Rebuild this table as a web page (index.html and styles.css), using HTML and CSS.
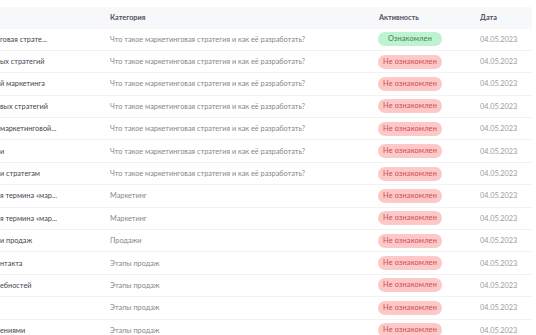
FILE: index.html
```html
<!DOCTYPE html>
<html lang="ru">
<head>
  <meta charset="UTF-8" />
  <title>Материалы</title>
  <link rel="stylesheet" href="styles.css">
</head>
<body>
  <div class="table">
    <div class="row head">
      <div class="cell"></div>
      <div class="cell">Категория</div>
      <div class="cell act">Активность</div>
      <div class="cell">Дата</div>
    </div>

    <div class="row">
      <div class="cell name">говая страте...</div>
      <div class="cell cat">Что такое маркетинговая стратегия и как её разработать?</div>
      <div class="cell"><span class="badge ok">Ознакомлен</span></div>
      <div class="cell date">04.05.2023</div>
    </div>
    <div class="row">
      <div class="cell name">ых стратегий</div>
      <div class="cell cat">Что такое маркетинговая стратегия и как её разработать?</div>
      <div class="cell"><span class="badge no">Не ознакомлен</span></div>
      <div class="cell date">04.05.2023</div>
    </div>
    <div class="row">
      <div class="cell name">й маркетинга</div>
      <div class="cell cat">Что такое маркетинговая стратегия и как её разработать?</div>
      <div class="cell"><span class="badge no">Не ознакомлен</span></div>
      <div class="cell date">04.05.2023</div>
    </div>
    <div class="row">
      <div class="cell name">вых стратегий</div>
      <div class="cell cat">Что такое маркетинговая стратегия и как её разработать?</div>
      <div class="cell"><span class="badge no">Не ознакомлен</span></div>
      <div class="cell date">04.05.2023</div>
    </div>
    <div class="row">
      <div class="cell name">маркетинговой...</div>
      <div class="cell cat">Что такое маркетинговая стратегия и как её разработать?</div>
      <div class="cell"><span class="badge no">Не ознакомлен</span></div>
      <div class="cell date">04.05.2023</div>
    </div>
    <div class="row">
      <div class="cell name">и</div>
      <div class="cell cat">Что такое маркетинговая стратегия и как её разработать?</div>
      <div class="cell"><span class="badge no">Не ознакомлен</span></div>
      <div class="cell date">04.05.2023</div>
    </div>
    <div class="row">
      <div class="cell name">и стратегам</div>
      <div class="cell cat">Что такое маркетинговая стратегия и как её разработать?</div>
      <div class="cell"><span class="badge no">Не ознакомлен</span></div>
      <div class="cell date">04.05.2023</div>
    </div>
    <div class="row">
      <div class="cell name">я термина «мар...</div>
      <div class="cell cat">Маркетинг</div>
      <div class="cell"><span class="badge no">Не ознакомлен</span></div>
      <div class="cell date">04.05.2023</div>
    </div>
    <div class="row">
      <div class="cell name">я термина «мар...</div>
      <div class="cell cat">Маркетинг</div>
      <div class="cell"><span class="badge no">Не ознакомлен</span></div>
      <div class="cell date">04.05.2023</div>
    </div>
    <div class="row">
      <div class="cell name">и продаж</div>
      <div class="cell cat">Продажи</div>
      <div class="cell"><span class="badge no">Не ознакомлен</span></div>
      <div class="cell date">04.05.2023</div>
    </div>
    <div class="row">
      <div class="cell name">нтакта</div>
      <div class="cell cat">Этапы продаж</div>
      <div class="cell"><span class="badge no">Не ознакомлен</span></div>
      <div class="cell date">04.05.2023</div>
    </div>
    <div class="row">
      <div class="cell name">ебностей</div>
      <div class="cell cat">Этапы продаж</div>
      <div class="cell"><span class="badge no">Не ознакомлен</span></div>
      <div class="cell date">04.05.2023</div>
    </div>
    <div class="row">
      <div class="cell name"></div>
      <div class="cell cat">Этапы продаж</div>
      <div class="cell"><span class="badge no">Не ознакомлен</span></div>
      <div class="cell date">04.05.2023</div>
    </div>
    <div class="row">
      <div class="cell name">ениями</div>
      <div class="cell cat">Этапы продаж</div>
      <div class="cell"><span class="badge no">Не ознакомлен</span></div>
      <div class="cell date">04.05.2023</div>
    </div>
  </div>
</body>
</html>
```

FILE: styles.css
```css
* {
  margin: 0;
  padding: 0;
  box-sizing: border-box;
}

body {
  font-family: 'Lato', 'Noto Sans', sans-serif;
  font-size: 7.3px;
  background: #ffffff;
  color: #44444f;
  width: 536px;
  height: 335px;
  overflow: hidden;
}

.table {
  width: 532px;
  padding-top: 7px;
}

.row {
  display: grid;
  grid-template-columns: 110px 268px 102px 1fr;
  align-items: center;
  height: 22.4px;
  border-bottom: 1px solid #f1f2f4;
}

.row.head {
  height: 21.5px;
  background: #f7f8fa;
  border-bottom: none;
  font-weight: 700;
  color: #50505f;
}

.cell {
  white-space: nowrap;
  overflow: hidden;
}

.head .act {
  padding-left: 1px;
}

.cat {
  color: #8b8682;
}

.date {
  color: #9c9c9c;
}

.badge {
  display: inline-block;
  width: 64px;
  height: 14px;
  line-height: 14px;
  border-radius: 7px;
  text-align: center;
  font-size: 7.3px;
  letter-spacing: 0.2px;
}

.badge.ok {
  background: #bdf3d0;
  color: #3f7a55;
}

.badge.no {
  background: #fdc8c8;
  color: #d0484c;
}
```
